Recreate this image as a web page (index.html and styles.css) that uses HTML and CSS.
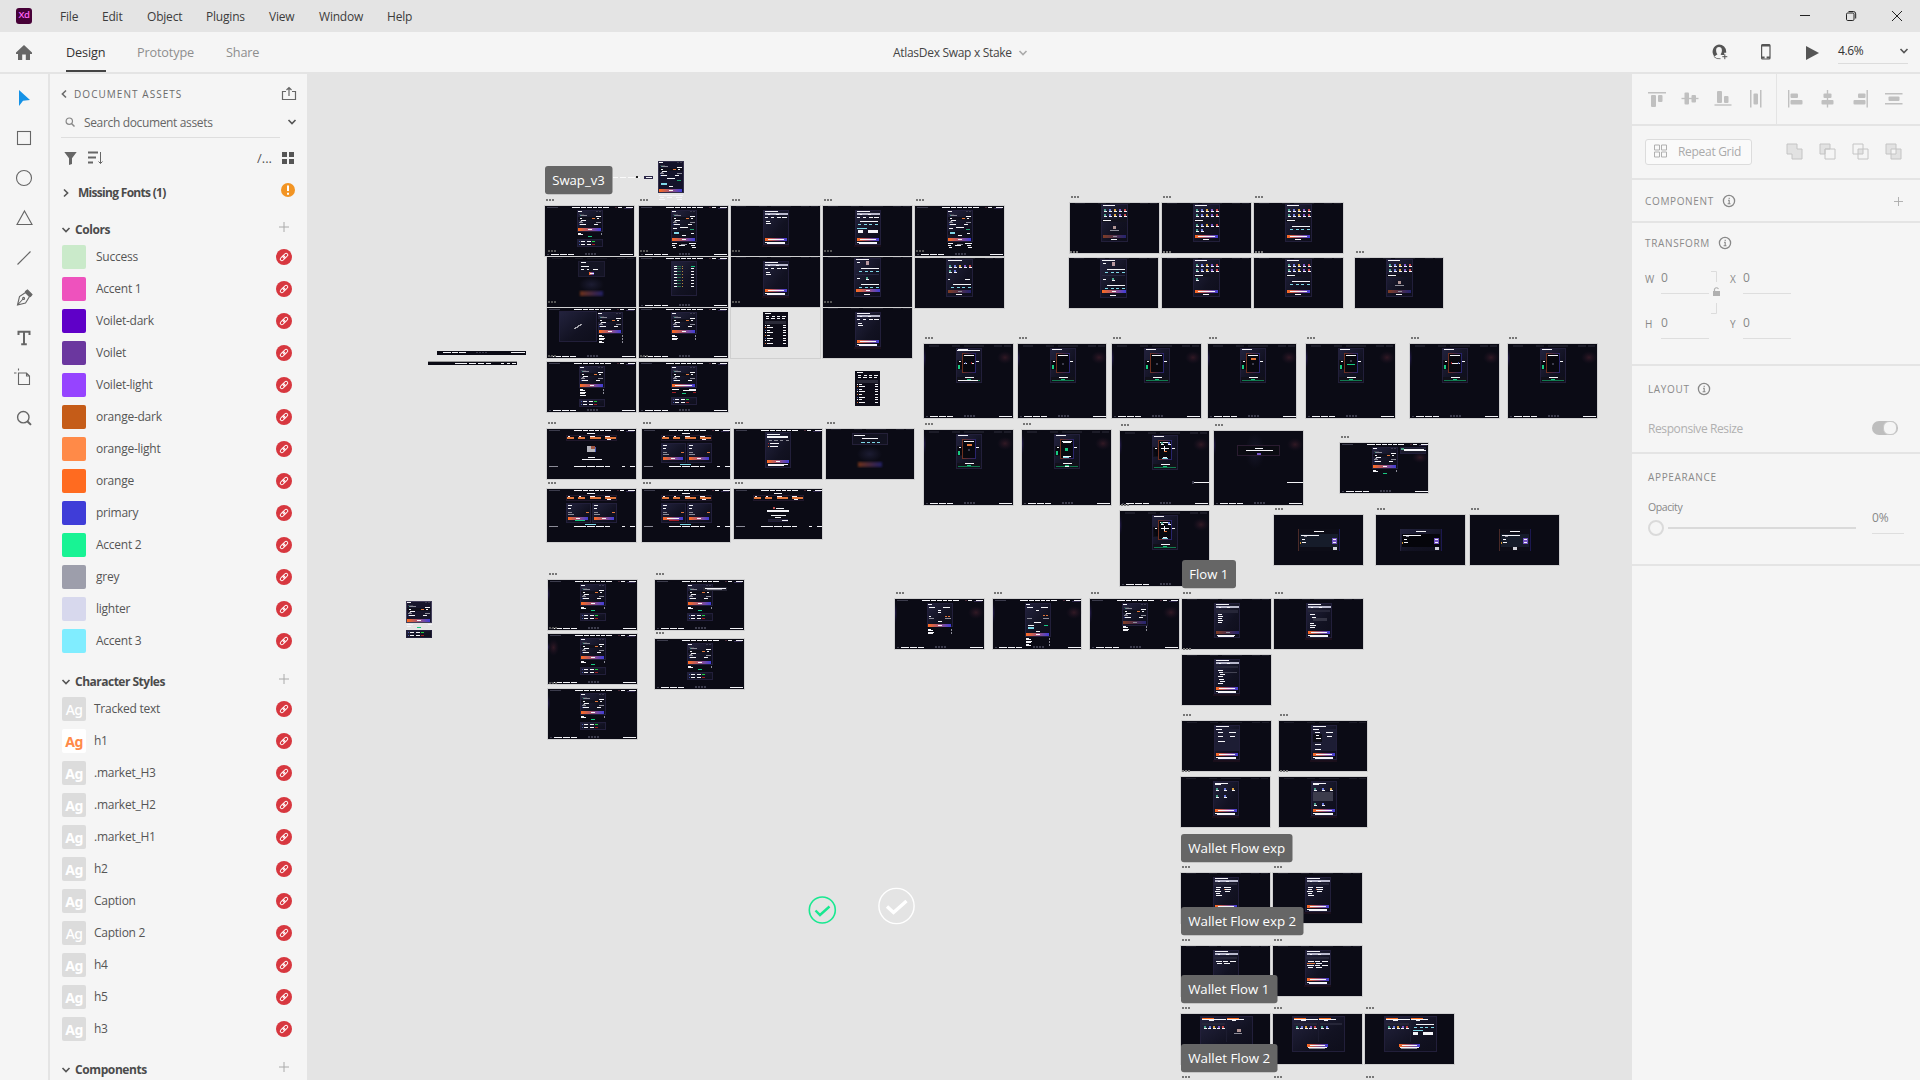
FILE: index.html
```html
<!DOCTYPE html>
<html lang="en">
<head>
<meta charset="utf-8">
<title>AtlasDex Swap x Stake</title>
<link rel="stylesheet" href="styles.css">
</head>
<body>
<svg class="defs" width="0" height="0">
  <symbol id="chev" viewBox="0 0 10 10"><path d="M1.5 3 5 6.6 8.5 3" fill="none" stroke="currentColor" stroke-width="1.6"/></symbol>
  <symbol id="plus" viewBox="0 0 10 10"><path d="M5 0v10M0 5h10" fill="none" stroke="currentColor" stroke-width="1"/></symbol>
  <symbol id="info" viewBox="0 0 14 14"><circle cx="7" cy="7" r="5.6" fill="none" stroke="currentColor" stroke-width="1.3"/><path d="M6 6.200h1.200v3.400M5.600 9.800h2.900M7.200 3.700v1.200" fill="none" stroke="currentColor" stroke-width="1.100"/></symbol>
  <symbol id="link" viewBox="0 0 16 16"><circle cx="8" cy="8" r="8" fill="#d7373f"/><g fill="none" stroke="#fff" stroke-width="1" transform="rotate(-45 8 8)"><rect x="3.4" y="6.4" width="5.4" height="3.2" rx="1.6"/><rect x="7.2" y="6.4" width="5.4" height="3.2" rx="1.6"/></g></symbol>
</svg>
<header class="titlebar">
  <div class="logo">Xd</div>
  <nav class="menu"><span class="m1">File</span><span class="m2">Edit</span><span class="m3">Object</span><span class="m4">Plugins</span><span class="m5">View</span><span class="m6">Window</span><span class="m7">Help</span></nav>
  <div class="winbtns">
    <svg width="12" height="12" viewBox="0 0 12 12"><path d="M1 5.5h10" stroke="#222" fill="none"/></svg>
    <svg width="12" height="12" viewBox="0 0 12 12"><g fill="none" stroke="#222"><rect x="1.5" y="3" width="7.5" height="7.5" rx="1.2"/><path d="M3.5 1.5h4.8a2.4 2.4 0 0 1 2.4 2.4v4.6"/></g></svg>
    <svg width="12" height="12" viewBox="0 0 12 12"><path d="m1 1 10 10M11 1 1 11" stroke="#222" fill="none"/></svg>
  </div>
</header>
<div class="modebar">
  <svg class="home" width="18" height="16" viewBox="0 0 18 16"><path d="M9 0 17 7.6V9h-2v6h-4.200V9.500H7.200V15H3V9H1V7.600z" fill="#666"/></svg>
  <nav class="modes"><span class="active">Design</span><span class="proto">Prototype</span><span class="share">Share</span></nav>
  <div class="doc"><span>AtlasDex Swap x Stake</span><svg width="10" height="10"><use href="#chev"/></svg></div>
  <div class="actions">
    <svg class="user" width="18" height="17" viewBox="0 0 18 17"><path d="M8 .5a7.200 7.200 0 0 1 7.200 7.200v1h-2V11h-2.700l-1-.8c1-1 1.400-2.500 1.400-4C10.900 3.800 9.700 3 8 3S5.100 3.800 5.100 6.200c0 1.500.4 3 1.400 4L3.400 12.400A7.200 7.200 0 0 1 8 .5z" fill="#555"/><path d="M2.800 12.500A7.200 7.200 0 0 0 9.500 14.700" fill="none" stroke="#777"/><path d="M13.800 10.200v5M11.300 12.700h5" stroke="#555" fill="none"/></svg>
    <svg class="phone" width="10" height="16" viewBox="0 0 10 16"><rect x=".6" y=".6" width="8.400" height="14.400" rx="1" fill="none" stroke="#555" stroke-width="1.200"/><path d="M.6 1.500h8.400M.6 13.500h3m2 0h3.400" stroke="#555" stroke-width="2"/></svg>
    <svg class="play" width="13" height="14" viewBox="0 0 13 14"><path d="M0 0v14l13-7z" fill="#555"/></svg>
    <div class="zoom"><span>4.6%</span><svg width="10" height="10"><use href="#chev"/></svg></div>
  </div>
</div>
<main class="work">
  <aside class="tools">
    <svg viewBox="0 0 20 20"><path d="M5 2v16l4-5.300 7-.7z" fill="#1592e6"/></svg>
    <svg viewBox="0 0 20 20"><rect x="3.500" y="3.500" width="13" height="13"/></svg>
    <svg viewBox="0 0 20 20"><circle cx="10" cy="10" r="7.500"/></svg>
    <svg viewBox="0 0 20 20"><path d="M10.500 3 18 16.500H3z"/></svg>
    <svg viewBox="0 0 20 20"><path d="M3.500 16.500 16.500 3.500"/></svg>
    <svg viewBox="0 0 20 20"><path d="M3.500 17 5.500 8.500l6-4 4 4-4 6.500zM3.500 17l5.500-6"/><circle cx="9.600" cy="10.400" r="1"/><path d="m11.500 3.500 2-1.500 4.500 4.500-1.500 2z" fill="#666"/></svg>
    <svg viewBox="0 0 20 20"><path d="M4.500 7V3.700h11V7M10 3.700v13M7.200 16.300h5.600" stroke-width="2"/></svg>
    <svg class="ab" viewBox="0 0 20 20"><path d="M4.500 6v11.500h11V9L12.500 6zM2.500 6h-2.500M4.500 3.500V1.500M12.500 6v3h3"/></svg>
    <svg viewBox="0 0 20 20"><circle cx="9.300" cy="9.200" r="5.700" stroke-width="1.400"/><path d="m13.300 13.200 3.700 3.700" stroke-width="2"/></svg>
  </aside>
  <aside class="assets">
    <div class="crumb"><svg class="left" width="10" height="10"><use href="#chev"/></svg><span>DOCUMENT ASSETS</span><svg class="export" width="16" height="15" viewBox="0 0 16 15"><path d="M5 5.500H1.500v8h13v-8H11M8 10V1.500M5.500 4 8 1.500 10.500 4" fill="none" stroke="#666" stroke-width="1.200"/></svg></div>
    <div class="search"><svg class="mag" width="10" height="10" viewBox="0 0 10 10"><circle cx="4.300" cy="4.200" r="3.200" fill="none" stroke="#888" stroke-width="1.200"/><path d="m6.500 6.500 3 3" stroke="#888" stroke-width="1.500"/></svg><span>Search document assets</span><svg class="drop" width="10" height="10"><use href="#chev"/></svg></div>
    <div class="filters">
      <svg width="13" height="13" viewBox="0 0 13 13"><path d="M.3 0h12.400L8 6.200V12l-3 .9V6.200z" fill="#666"/></svg>
      <svg width="16" height="14" viewBox="0 0 16 14"><path d="M1 1.500h10M1 6.500h8M1 11.500h5" stroke="#666" stroke-width="2"/><path d="M13.500 1v11.500M11.500 10.500l2 2 2-2" stroke="#666" fill="none"/></svg>
      <span class="path">/...</span>
      <svg class="gridi" width="12" height="12" viewBox="0 0 12 12"><path d="M0 0h5v5H0zM7 0h5v5H7zM0 7h5v5H0zM7 7h5v5H7z" fill="#555"/></svg>
    </div>
    <div class="missing"><svg class="right" width="10" height="10"><use href="#chev"/></svg><b>Missing Fonts (1)</b><svg class="warn" width="14" height="14" viewBox="0 0 14 14"><circle cx="7" cy="7" r="7" fill="#f29423"/><path d="M7 2.500v5.500M7 9.800v2" stroke="#fff" stroke-width="2"/></svg></div>
    <div class="head h-colors"><svg width="10" height="10"><use href="#chev"/></svg><b>Colors</b><svg class="add" width="10" height="10"><use href="#plus"/></svg></div>
    <div class="list" id="colors"></div>
    <div class="head h-chars"><svg width="10" height="10"><use href="#chev"/></svg><b>Character Styles</b><svg class="add" width="10" height="10"><use href="#plus"/></svg></div>
    <div class="list" id="chars"></div>
    <div class="head h-comps"><svg width="10" height="10"><use href="#chev"/></svg><b>Components</b><svg class="add" width="10" height="10"><use href="#plus"/></svg></div>
  </aside>
  <section class="canvas"><svg id="board" width="1325" height="1008" viewBox="307 72 1325 1008"></svg></section>
  <aside class="props">
    <section class="align">
      <svg width="144" height="50" viewBox="1632 74 144 50"><g fill="#c0c0c0"><rect x="1648" y="92" width="18" height="1.500"/><rect x="1651" y="95" width="5" height="12" rx="1"/><rect x="1658" y="95" width="4.500" height="7" rx="1"/><rect x="1681.500" y="97.800" width="17" height="1.400"/><rect x="1684.500" y="92.500" width="4.500" height="12" rx="1"/><rect x="1691.500" y="95" width="4.500" height="7.500" rx="1"/><rect x="1714.500" y="104.300" width="17" height="1.400"/><rect x="1717" y="91" width="5" height="12" rx="1"/><rect x="1724" y="96" width="4.500" height="7" rx="1"/><rect x="1750" y="90" width="1.500" height="17.500"/><rect x="1760" y="90" width="1.500" height="17.500"/><rect x="1753.500" y="93.500" width="4.500" height="11" rx="1"/></g></svg>
      <svg class="second" width="144" height="50" viewBox="1777 74 143 50"><g fill="#c0c0c0"><rect x="1788" y="90" width="1.400" height="17.500"/><rect x="1790.500" y="93.500" width="7.500" height="4.500" rx="1"/><rect x="1790.500" y="100" width="12" height="4.500" rx="1"/><rect x="1826.800" y="90" width="1.400" height="17.500"/><rect x="1823.500" y="93.500" width="8" height="4.500" rx="1"/><rect x="1821.500" y="100" width="12" height="4.500" rx="1"/><rect x="1866.500" y="90" width="1.400" height="17.500"/><rect x="1858" y="93.500" width="7.500" height="4.500" rx="1"/><rect x="1853.500" y="100" width="12" height="4.500" rx="1"/><rect x="1885" y="93" width="17.500" height="1.500"/><rect x="1885" y="103" width="17.500" height="1.500"/><rect x="1888.500" y="96.500" width="11" height="4.500" rx="1"/></g></svg>
    </section>
    <section class="repeat">
      <div class="rg"><svg width="14" height="14" viewBox="0 0 14 14"><path d="M.5 1h5v5h-5zM7.500 1h5v5h-5zM.5 8h5v5h-5zM7.500 8h5v5h-5z" fill="none" stroke="#b0b0b0"/></svg><span>Repeat Grid</span></div>
      <div class="bools">
        <svg viewBox="0 0 17 17"><path d="M1 1h10v5h5v10H6v-5H1z" fill="#e2e2e2" stroke="#c4c4c4"/></svg>
        <svg viewBox="0 0 17 17"><path d="M1 1h10v5H6v5H1z" fill="#e2e2e2" stroke="#c4c4c4"/><path d="M6 6h10v10H6z" fill="none" stroke="#c4c4c4"/></svg>
        <svg viewBox="0 0 17 17"><path d="M6 6h5v5H6z" fill="#e2e2e2"/><path d="M1 1h10v10H1zM6 6h10v10H6z" fill="none" stroke="#c4c4c4"/></svg>
        <svg viewBox="0 0 17 17"><path d="M1 1h10v5h5v10H6v-5H1zM6 6v5h5V6z" fill="#e2e2e2" fill-rule="evenodd" stroke="#c4c4c4"/></svg>
      </div>
    </section>
    <section class="component"><span class="cap">COMPONENT</span><svg class="i" width="14" height="14"><use href="#info"/></svg><svg class="add2" width="9" height="9"><use href="#plus"/></svg></section>
    <section class="transform">
      <div class="row"><span class="cap">TRANSFORM</span><svg class="i" width="14" height="14"><use href="#info"/></svg></div>
      <div class="fields">
        <div class="col"><div class="f"><span class="k">W</span><span class="v">0</span></div><div class="f"><span class="k">H</span><span class="v">0</span></div></div>
        <svg class="lock" width="12" height="44" viewBox="0 0 12 44"><path d="M2 .5h5.500V11M2 42.500h5.500V32" fill="none" stroke="#dcdcdc"/><rect x="4" y="20" width="7" height="5" fill="#b0b0b0"/><path d="M5.500 20v-2q2-2.500 4 0" fill="none" stroke="#b0b0b0" stroke-width="1.200"/></svg>
        <div class="col"><div class="f"><span class="k k2">X</span><span class="v">0</span></div><div class="f"><span class="k k2">Y</span><span class="v">0</span></div></div>
      </div>
    </section>
    <section class="layout">
      <div class="row"><span class="cap">LAYOUT</span><svg class="i" width="14" height="14"><use href="#info"/></svg></div>
      <div class="resp"><span>Responsive Resize</span><i class="toggle"></i></div>
    </section>
    <section class="appearance">
      <span class="cap">APPEARANCE</span>
      <div class="op"><div class="opl"><span class="olab">Opacity</span><div class="slider"><i class="knob"></i><i class="track"></i></div></div><div class="oval">0%</div></div>
    </section>
    <section class="rest"></section>
  </aside>
</main>
<script src="board.js"></script>
</body>
</html>
```
FILE: styles.css
```css
*{box-sizing:border-box}
body{margin:0;width:1920px;height:1080px;overflow:hidden;background:#e4e4e4;font-family:"Open Sans","Noto Sans",sans-serif;font-size:12px;letter-spacing:-.2px;color:#4b4b4b;display:flex;flex-direction:column}
svg{display:block;flex:none}
.defs{position:absolute}
.titlebar{height:32px;flex:none;display:flex;align-items:center;padding-left:16px;color:#3c3c3c}
.logo{width:16px;height:16px;border-radius:3px;background:#470137;color:#ff61f6;font-size:9.500px;font-weight:600;line-height:14px;text-align:center;letter-spacing:-.3px}
.menu{display:flex;margin-left:28px}
.m1{width:42px}.m2{width:45px}.m3{width:59px}.m4{width:63px}.m5{width:50px}.m6{width:68px}
.winbtns{display:flex;gap:34px;margin-left:auto;padding-right:17px}
.modebar{height:40px;flex:none;background:#f5f5f5;display:flex;align-items:stretch;padding-left:15px}
.home{margin-top:13px}
.modes{display:flex;font-size:12.700px;color:#8e8e8e;line-height:41px;margin-left:33px;letter-spacing:-.15px}
.modes .active{color:#333;border-bottom:2px solid #444;width:40px;height:40px}
.proto{margin-left:31px;width:57px}.share{margin-left:32px}
.doc{display:flex;align-items:center;gap:6px;margin-left:auto;margin-right:0;color:#444;padding-top:1px;width:136px;white-space:nowrap;letter-spacing:-.3px}
.doc svg{color:#aaa}
.actions{display:flex;width:209px;margin-left:682px}
.user{margin-top:12px}.phone{margin:12px 0 0 32px}.play{margin:14px 0 0 35px}
.zoom{display:flex;margin-left:19px;width:70px;height:32px;border-bottom:1px solid #dcdcdc;justify-content:space-between;line-height:38px;color:#333;letter-spacing:-.4px}
.zoom svg{margin-top:14px;color:#555;margin-right:-1px}
.work{display:flex;margin-top:2px;height:1006px}
.tools{width:48px;background:#f5f5f5;padding:14px 0 0 14px;display:flex;flex-direction:column;gap:20px;flex:none}
.tools svg{width:20px;height:20px;fill:none;stroke:#666;stroke-width:1.100}
.tools svg:first-child{stroke:none}
.tools .ab{margin:-1px 0 1px}
.assets{width:257px;margin-left:2px;background:#f5f5f5;flex:none;display:flex;flex-direction:column;padding-left:11px;overflow:hidden;color:#555}
.crumb{display:flex;align-items:center;height:30px;margin-top:5px;font-size:10px;letter-spacing:1.050px;color:#6b6b6b;flex:none}
.crumb span{margin-left:3px;flex:1}
.left{transform:rotate(90deg) translateY(2px)}.right{transform:rotate(-90deg)}
.export{margin:-2px 10px 0 0}
.search{display:flex;align-items:center;height:29px;width:219px;border-bottom:1px solid #dedede;color:#666;flex:none;padding-bottom:2px}
.search span{margin-left:9px;white-space:nowrap;letter-spacing:-.35px}.mag{margin-left:4px}
.drop{margin-left:auto;margin-right:-17px;color:#555}
.filters{display:flex;align-items:center;height:41px;padding:0 0 1px 3px;gap:10px;flex:none}
.path{margin-left:auto;font-size:13px;letter-spacing:0}.gridi{margin:0 13px 0 0}
.missing{display:flex;align-items:center;height:29px;flex:none;padding-bottom:2px}
.missing b{margin-left:7px;flex:1;letter-spacing:-.7px}.warn{margin:-6px 12px 0 0}
b{font-weight:700;color:#4b4b4b;letter-spacing:-.4px;font-size:12px}
.head{display:flex;align-items:center;height:30px;flex:none;padding-bottom:1px}
.head b{margin-left:4px;flex:1}.add{margin:-5px 18px 0 0;color:#aaa}
.h-colors{margin-top:7px}.h-chars{margin-top:14px}.h-comps{margin-top:14px}
.h-chars b{letter-spacing:-.5px}
.list{display:flex;flex-direction:column;gap:8px;flex:none}
.item{display:flex;align-items:center;height:24px;padding-left:1px}
.sw{width:24px;height:24px;border-radius:2px}
.item span{flex:1;margin-left:10px;padding-bottom:1px;letter-spacing:-.25px}
.item .link{margin-right:15px}
.ag{width:24px;height:24px;border-radius:2px;background:#dcdcdc;color:#fff;font:700 14px/25px "Noto Sans","Open Sans",sans-serif;text-align:center;letter-spacing:-.6px}
.item .ag + span{margin-left:8px}
.ag.thin{font-weight:500}.ag.orange{background:#fff;color:#ff8a48}
.canvas{width:1325px;height:1008px;margin-top:-2px;flex:none}
.props{width:288px;flex:none;display:flex;flex-direction:column;gap:2px;color:#888}
.props section{background:#f5f5f5;flex:none}
.align{height:50px;display:flex}.second{border-left:1px solid #e4e4e4}
.repeat{height:52px;display:flex;align-items:center;padding:0 0 1px 13px}
.rg{width:107px;height:26px;border:1px solid #dcdcdc;border-radius:3px;background:#fafafa;display:flex;align-items:center;gap:10px;padding:0 0 1px 8px;color:#aaa;white-space:nowrap;letter-spacing:-.3px}
.bools{display:flex;gap:16px;margin:-1px 0 0 34px}.bools svg{width:17px;height:17px}
.cap{font-size:10px;letter-spacing:.65px;color:#8a8a8a}
.i{color:#888;margin-left:8px}
.component{height:41px;display:flex;align-items:center;padding:1px 17px 0 13px}.add2{margin-left:auto;color:#aaa}
.transform{height:141px;padding:14px 13px}
.row{display:flex;align-items:center;height:14px}
.transform .row{margin-top:-2px;height:16px}
.fields{display:flex;margin-top:13px}
.col{display:flex;flex-direction:column;gap:15px}
.f{display:flex;height:30px;line-height:28px}
.k{width:16px;font-size:10px;padding-top:1px}.k2{width:13px}
.v{width:48px;border-bottom:1px solid #dedede}
.lock{margin:7px 9px 0 0}
.layout{height:86px;padding:16px}
.layout .i{margin-left:7px}
.resp{display:flex;justify-content:space-between;align-items:center;margin-top:22px;padding-right:6px;color:#b0b0b0;height:20px;letter-spacing:-.4px}
.toggle{width:26px;height:14px;border-radius:7px;background:#bebebe;display:flex;justify-content:flex-end;align-items:center;padding-right:1px;margin-top:-1px}
.toggle::after{content:"";width:12px;height:12px;border-radius:6px;background:#f5f5f5;border:1px solid #c8c8c8}
.appearance{height:110px;padding:16px;display:flex;flex-direction:column}
.op{display:flex;margin-top:15px}
.opl{width:224px;margin-right:0}
.olab{font-size:10.500px;letter-spacing:-.4px;display:block;height:17px;line-height:16px}
.slider{display:flex;align-items:center;gap:4px;margin-top:4px}
.knob{width:16px;height:16px;border:2px solid #dadada;border-radius:50%}
.track{width:188px;height:2px;background:#dadada}
.oval{width:32px;height:30px;border-bottom:1px solid #dedede;line-height:28px;margin-top:5px}
.props .rest{flex:1}
#board text{fill:#fff;font-size:13.500px;letter-spacing:0}
```
FILE: board.js
```js
// Asset lists
const link = '<svg class="link" width="16" height="16"><use href="#link"/></svg>';
const colors = [['Success','#caeaca'],['Accent 1','#ee52bd'],['Voilet-dark','#5f00c8'],['Voilet','#6b379f'],['Voilet-light','#9644ff'],['orange-dark','#c55c18'],['orange-light','#ff8a48'],['orange','#ff6b20'],['primary','#3f3dd8'],['Accent 2','#18f394'],['grey','#9d9eab'],['lighter','#d7d8ed'],['Accent 3','#80edff']];
document.getElementById('colors').innerHTML = colors.map(([n, c]) => `<div class="item"><i class="sw" style="background:${c}"></i><span>${n}</span>${link}</div>`).join('');
const chars = [['Tracked text','thin'],['h1','orange'],['.market_H3',''],['.market_H2',''],['.market_H1',''],['h2',''],['Caption',''],['Caption 2','thin'],['h4',''],['h5',''],['h3','']];
document.getElementById('chars').innerHTML = chars.map(([n, c]) => `<div class="item"><i class="ag ${c}">Ag</i><span>${n}</span>${link}</div>`).join('');

// Artboards
let out = '', ox = 0, oy = 0;
const W = '#f4f4f8', G = '#8c8c98', D = '#3c3c4c', O = '#e0763c', C = '#7fd8e8', N = '#18c880', B = '#4a5ab0', RD = '#a01c24';
const R = (x, y, w, h, f, extra = '') => { out += `<rect x="${ox + x}" y="${oy + y}" width="${w}" height="${h}" fill="${f}" ${extra}/>`; };
const row = (y, f, ...xs) => { for (let i = 0; i < xs.length; i += 2) R(xs[i], y, xs[i + 1], 1, f); };
const box = (x, y, w, h, f = 'url(#card)', s = '#221f3a') => R(x + .5, y + .5, w - 1, h - 1, f, `stroke="${s}"`);
const btn = (x, y, w, dim) => { R(x, y, w, 3, 'url(#btn)', dim ? 'opacity=".45"' : ''); R(x + w / 2 - 2, y + 1, 4, 1, dim ? G : W); };
const wide = (x, y, w) => { btn(x, y, w); R(x + 3, y + 1, w - 6, 1, W); };
const nav = () => { row(1, D, 2, 11); row(1, W, 27, 8, 36, 5, 42, 5, 48, 4, 53, 4, 58, 6, 73, 4, 81, 7); R(70, 1, 2, 1, '#4a2a38'); R(79, 2, 8, 1, '#2c2448'); };
const foot = y => { row(y, W, 6, 8, 15, 7, 23, 6, 75, 13); R(2, y, 2, 1, D); row(y - 1, D, 40, 2, 43, 2, 46, 2, 49, 2); row(y, D, 40, 2, 43, 2, 46, 2, 49, 2); };
const haze = y => { row(y, '#1c1c28', 5, 10, 28, 8, 40, 20, 70, 8, 80, 7); };
const form = x => {
  row(5, W, x + 1, 4); row(5, D, x + 19, 2, x + 22, 2); row(8, D, x + 2, 5); row(9, G, x + 4, 6); R(x + 3, 9, 1, 1, '#3e9a8a');
  row(10, W, x + 19, 5); R(x + 1, 11, 24, 3, '#10101c'); row(12, W, x + 3, 2); row(12, O, x + 15, 3); row(12, W, x + 20, 2);
  row(14, W, x + 4, 5); row(15, G, x + 3, 2); row(16, G, x + 2, 4, x + 19, 5); row(18, W, x + 3, 6, x + 17, 4); R(x + 2, 18, 1, 1, B);
};
const ticks = y => { box(32, y, 26, 8); row(y + 2, W, 36, 4, 42, 4); row(y + 5, W, 36, 4, 42, 4); R(34, y + 2, 1, 1, B); R(34, y + 5, 1, 1, B); R(47, y + 2, 3, 1, '#20d040'); R(47, y + 5, 3, 1, RD); };
const under = (y, n) => { for (let i = 0; i < n; i++) { const t = y + i * 3; row(t, W, 33, 3 + i % 2 * 3); row(t + 1, W, 33, 5); R(56, t, 1, 2, G); } };
const glow = () => { R(73, 7, 16, 13, 'url(#red)'); R(0, 3, 5, 22, 'url(#vio)'); };
const icons = (y, n, x = 34, s = 5) => { for (let i = 0; i < n; i++) { R(x + i * s, y, 2, 2, ['#4aa08a', '#6a78d8', '#d8a040', '#7a58c8', '#c84848'][i % 5]); R(x + i * s - .5, y + 2, 3, 1, W); } };
const cyan = (y, x = 34) => { R(x + 2, y, 18, 1, W); row(y + 3, C, x, 3, x + 6, 3, x + 11, 3, x + 17, 3); };
const modal = () => { haze(0); box(32, 4, 26, 35); row(5, W, 34, 13); R(34, 7, 23, 2, '#b8b8cc'); row(8, W, 37, 2, 45, 3); };
const mfoot = () => { wide(34, 32, 22); R(34, 36, 20, 1, W); R(36, 37, 18, 1, W); R(31, 39, 27, 2, '#24121f', 'opacity=".6"'); };

const K = {
  swap() { nav(); foot(48); box(32, 4, 26, 22); form(32); btn(33, 22, 23); under(27, 1); row(30, N, 43, 4); ticks(33); },
  swapB() { K.swap(); R(0, 5, 5, 18, 'url(#vio)'); },
  planet() { K.swap(); R(0, 5, 11, 17, 'url(#red)'); R(0, 8, 5, 10, 'url(#vio)'); },
  tip() { K.swap(); R(48, 7, 24, 4, '#252533'); row(8, W, 50, 21); row(9, G, 52, 15); },
  long() { nav(); foot(48); box(32, 4, 26, 32); form(32); row(21, W, 41, 8); row(22, W, 34, 4); row(23, '#22a070', 51, 4); R(33, 25, 23, 4, '#10101c'); R(35, 26, 5, 2, C); row(27, W, 52, 3); row(29, W, 43, 4); btn(33, 32, 23); row(37, W, 33, 5, 50, 7); row(38, G, 42, 6); row(39, W, 33, 3, 40, 6, 52, 4); row(41, W, 34, 3, 53, 4); },
  blur() { haze(1); box(31, 4, 27, 16, '#141424', '#1f1d33'); row(5, W, 34, 5); row(9, W, 34, 8); row(12, W, 34, 3, 40, 2, 46, 5); btn(42, 15, 5); R(32, 20, 25, 15, 'url(#fog)'); R(33, 34, 23, 5, 'url(#btn)', 'opacity=".4" filter="url(#b)"'); },
  rates() { nav(); foot(48); box(32, 4, 26, 35); for (let i = 0; i < 8; i++) { const y = 9 + i * 2.9 | 0; row(y, W, 35, 3, 52, 3); row(y, '#20684c', 38, 4); R(43, y, 1, 1, '#b88c3c'); } row(9, N, 52, 4); },
  pick() { modal(); row(11, W, 34, 3, 40, 3, 46, 4, 51, 5); row(15, W, 35, 4); row(17, W, 35, 5); mfoot(); },
  none() { modal(); row(11, W, 34, 3, 40, 3, 46, 4, 51, 5); cyan(15, 35); row(22, C, 34, 10); R(35, 24, 5, 3, W); R(45, 24, 10, 3, W); mfoot(); },
  dual() { haze(0); box(31, 1, 27, 39); row(2, W, 33, 13); row(5, W, 34, 3); R(43, 4, 3, 4, '#b898a0'); cyan(11, 36); R(33, 17, 23, 1, '#262640'); row(21, W, 34, 3); icons(20, 1, 43); cyan(27, 36); btn(33, 32, 24); row(37, W, 41, 6); },
  grid() { haze(0); box(31, 1, 27, 38); row(2, W, 33, 12); icons(6, 5); icons(11, 5); R(32, 16, 25, 3, '#12121e'); row(17, W, 33, 8); row(36, W, 41, 6); },
  gridA() { K.grid(); R(43, 23, 3, 3, '#b09494'); row(27, G, 40, 9); btn(33, 32, 23, 1); },
  gridB() { K.grid(); icons(21, 5); icons(26, 2); wide(33, 32, 23); },
  gridC() { K.grid(); cyan(23, 36); wide(33, 32, 23); },
  gridD() { K.grid(); icons(20, 1); wide(33, 32, 23); },
  gridE() { haze(0); box(31, 1, 27, 38); row(2, W, 33, 14); icons(7, 5); icons(12, 2); row(21, W, 33, 2, 50, 5); cyan(26, 36); btn(33, 32, 23, 1); row(36, W, 41, 6); },
  chart() { nav(); foot(48); box(12, 3, 38, 31); out += `<path d="M${ox + 27} ${oy + 21}l8-5" stroke="#a8a8b0" stroke-width="1.200"/>`; ox += 19; box(32, 4, 25, 22); form(31); btn(33, 22, 22); under(27, 3); ox -= 19; },
  plain() { nav(); foot(48); box(32, 4, 26, 22); form(32); btn(33, 22, 23); under(27, 2); },
  plainT() { K.plain(); row(33, W, 33, 6); ticks(37); },
  err() { nav(); foot(48); box(32, 4, 26, 22); form(32); wide(33, 22, 23); row(27, W, 33, 7, 50, 7); row(28, W, 44, 13); row(30, RD, 33, 4, 54, 3); row(31, N, 43, 4); ticks(35); },
  stats() { nav(); row(4, W, 40, 8); box(19, 6, 51, 6, 'none', '#20182c'); R(20, 8, 7, 2, O); R(31, 8, 7, 2, O); R(43, 8, 11, 2, O); R(58, 8, 11, 2, O); row(7, W, 21, 2, 32, 2, 43, 5, 58, 5); row(10, W, 60, 4); },
  sfoot() { row(37, G, 2, 9); row(37, W, 27, 12, 40, 8, 49, 8, 58, 5, 75, 3, 83, 5); },
  poolA() { K.stats(); K.sfoot(); R(40, 17, 8, 6, '#b4b4bc'); R(44, 17, 4, 3, '#a05844'); R(48, 18, 1, 5, B); row(28, W, 41, 7); row(30, W, 35, 20); },
  poolB() { K.stats(); K.sfoot(); [19, 45].forEach(x => { box(x, 14, 25, 20); row(16, W, x + 2, 4); row(19, W, x + 2, 3); row(23, G, x + 2, 4); row(25, G, x + 2, 6); R(x + 20, 23, 3, 1, O); btn(x + 2, 28, 20); }); row(35, C, 38, 11); },
  poolC() { K.poolB(); row(31, N, 28, 10); },
  poolD() { K.poolB(); row(31, RD, 27, 10); row(29, W, 25, 12); },
  poolE() { K.stats(); K.sfoot(); R(39, 18, 2, 2, '#c05050'); row(19, W, 42, 8); R(33, 21, 22, 2, W); row(26, W, 37, 15); row(28, W, 41, 6); box(34, 30, 20, 3, '#20202c'); R(48, 31, 6, 1, W); },
  poolF() { nav(); box(31, 3, 26, 36); row(5, W, 33, 13); R(33, 7, 21, 2, W); row(11, G, 35, 3, 40, 4, 46, 3, 52, 3); row(14, W, 36, 9); row(17, W, 36, 8); R(34, 14, 1, 1, RD); R(34, 17, 1, 1, O); btn(33, 31, 22); R(34, 35, 20, 1, W); row(36, W, 34, 16); },
  poolG() { haze(0); box(26, 4, 36, 12, '#121220', '#242038'); row(6, W, 28, 11); row(9, W, 36, 16); row(13, C, 35, 4, 41, 3, 46, 3, 51, 3); R(31, 17, 25, 16, 'url(#fog)'); R(32, 33, 24, 5, 'url(#btn)', 'opacity=".4" filter="url(#b)"'); },
  stake() { nav(); foot(48); glow(); box(32, 4, 26, 24); row(5, W, 33, 4); row(8, W, 34, 6, 48, 7); row(11, W, 43, 3); row(13, W, 43, 3); row(17, O, 50, 2, 53, 2); row(17, W, 34, 2); row(19, G, 34, 5, 50, 6); row(22, W, 43, 4); btn(33, 25, 23); under(30, 2); },
  stakeL() { nav(); foot(48); glow(); box(32, 4, 26, 34); row(5, W, 33, 4); row(8, W, 34, 6, 48, 7); row(11, W, 43, 3); row(16, O, 50, 2, 53, 2); row(19, G, 34, 5, 50, 6); row(23, W, 43, 4, 41, 7); row(26, W, 35, 6); row(26, N, 51, 4); R(35, 28, 6, 2, C); row(32, W, 43, 4); btn(33, 34, 23); under(39, 3); },
  stakeD() { nav(); foot(48); glow(); box(32, 4, 26, 23); form(32); btn(33, 22, 23, 1); under(27, 2); },
  list() { modal(); R(34, 11, 22, 3, '#262638'); for (let i = 0; i < 5; i++) row(15 + i * 2, W, 36, 4 + i % 2); btn(34, 32, 23, 1); R(35, 36, 18, 1, W); row(37, W, 36, 16); },
  listB() { modal(); R(34, 11, 22, 2, '#262638'); row(15, W, 36, 5); row(18, W, 38, 4); R(39, 19, 14, 3, '#343444'); row(24, W, 36, 4); row(26, W, 36, 6); row(28, W, 36, 5); mfoot(); },
  listC() { modal(); R(34, 11, 22, 2, '#262638'); for (let i = 0; i < 7; i++) row(15 + i * 2.3 | 0, W, 36 + i % 3, 5); R(41, 17, 14, 1, '#444454'); mfoot(); },
  listD() { haze(1); box(32, 4, 26, 35); row(5, W, 34, 13); R(33, 8, 24, 22, '#1d1d34'); row(8, W, 34, 6); row(11, W, 36, 5, 47, 7); row(15, W, 36, 5, 48, 5); row(20, W, 36, 7); mfoot(); },
  listE() { K.listD(); R(34, 13, 9, 8, '#0e0e18'); row(14, W, 37, 3); row(17, W, 37, 5); row(23, W, 36, 6); row(28, W, 36, 6); },
  coins() { haze(1); box(32, 4, 26, 35); row(6, W, 34, 13); row(7, W, 34, 6); icons(11, 3, 35, 8); icons(18, 2, 35, 8); mfoot(); },
  coinsB() { haze(1); box(32, 4, 26, 35); row(6, W, 34, 13); row(7, W, 34, 6); icons(11, 3, 35, 8); R(34, 15, 20, 9, '#3c3c4c'); icons(26, 2, 35, 8); mfoot(); },
  exp() { modal(); R(33, 10, 23, 2, '#262638'); row(14, W, 35, 5, 43, 7); row(16, W, 35, 4, 44, 6); row(18, W, 34, 6, 44, 5); row(20, W, 35, 4); row(22, W, 35, 6); R(43, 16, 1, 1, O); mfoot(); },
  expB() { modal(); R(33, 11, 23, 2, '#262638'); row(15, W, 35, 6, 42, 5, 49, 6); row(17, W, 36, 5, 43, 6); },
  expC() { K.expB(); row(19, W, 34, 7, 42, 5, 49, 6); row(17, O, 34, 8); row(21, W, 35, 5, 43, 6); mfoot(); },
  two() { box(19, 2, 53, 36); R(21, 4, 12, 1, '#ff7020'); R(46, 4, 12, 1, '#ff7020'); row(5, W, 21, 24, 46, 17); row(6, W, 28, 5, 51, 4); R(21, 9, 23, 2, '#262638'); R(45, 4, 1, 24, '#1c1c30'); icons(12, 5, 23, 4.5); wide(34, 30, 21); row(33, W, 35, 19); row(34, G, 36, 16); },
  twoA() { K.two(); R(56, 15, 4, 3, '#b09494'); row(19, G, 53, 8); },
  twoB() { K.two(); icons(12, 2, 48); R(47, 9, 22, 2, '#262638'); },
  twoC() { K.two(); cyan(10, 49); row(16, C, 48, 10); R(48, 18, 5, 3, W); R(58, 18, 10, 3, W); },
  bridge(h, v = 0) { haze(1); haze(2); glow(); foot(h - 2); box(32, 4, 26, 35); row(5, W, 34, 10); R(33, 33, 24, 5, '#11111a'); box(33, 16, 6, 10, '#07070e', '#11111a'); R(34, 21, 2, 4, N); row(17, W, 35, 2, 52, 3); box(38, 9, 14, 20, '#08080f', 'url(#edge)'); row(11, W, 40, 10); row(33, W, 41, 9); row(35, N, 43, 4); row(36, '#127a50', 34, 22);
    if (v == 0) { R(33, 6, 23, 1, W); row(19, W, 40, 3, 47, 3); R(41, 18, 1, 2, B); R(47, 18, 1, 2, RD); row(36, W, 34, 20); }
    if (v == 1) R(44, 19, 2, 2, D);
    if (v == 2) { R(43, 14, 5, 2, O); R(44, 19, 2, 2, D); }
    if (v == 3) { R(44, 16, 2, 2, D); R(41, 20, 8, 1, N); }
    if (v == 4) { row(19, W, 41, 9); R(41, 18, 1, 2, RD); R(48, 18, 1, 2, B); }
    if (v == 5) { row(12, W, 41, 8); R(43, 18, 3, 3, N); row(26, W, 41, 8); row(27, C, 41, 6); R(43, 36, 4, 1, W); }
    if (v == 6) { R(34, 21, 2, 4, '#0a0a12'); icons(11, 2, 41, 7); row(17, W, 41, 8); R(44, 15, 1, 6, W); row(20, O, 44, 3); row(26, W, 43, 4); row(27, C, 42, 6); } },
  b0() { K.bridge(74, 0); }, b1() { K.bridge(74, 1); }, b2() { K.bridge(74, 2); }, b3() { K.bridge(74, 3); }, b4() { K.bridge(74, 4); },
  b5() { K.bridge(75, 5); }, b6() { K.bridge(74, 6); row(51, W, 73, 16); R(72, 50, 2, 3, D); }, b7() { K.bridge(75, 2); }, b8() { K.bridge(75, 6); },
  alert() { glow(); foot(72); R(31, 2, 20, 36, 'url(#fog)', 'opacity=".7"'); box(23, 14, 43, 11, '#0b0b12', '#2a1c30'); row(17, W, 41, 8); row(19, W, 32, 27); R(43, 22, 4, 2, '#7a58c8'); row(51, W, 73, 16); },
  toast() { nav(); foot(48); box(32, 4, 26, 22); form(32); btn(33, 22, 23); under(27, 1); row(30, N, 43, 4); R(72, 9, 16, 11, 'url(#red)'); box(60, 4, 26, 7, '#1c1c2c'); row(6, W, 64, 20); row(7, W, 64, 22); R(61, 5, 3, 2, '#4aa080'); },
  dlg(v) { const x = v == 2 ? 29 : 24, w = v == 2 ? 32 : 42; R(x, 14, w, 22, v == 1 ? 'url(#card)' : '#0d0d17'); R(x, 14, 1, 22, v == 1 ? '#27243c' : '#4a2a28'); R(x + w - 1, 14, 1, 22, '#1c1850'); R(x + 2, 19, w - 4, 13, v == 1 ? '#05050b' : '#161c2a'); row(16, W, 40, 10); row(20, W, x + 3, 18); row(21, G, x + 6, 3); row(24, W, x + 4, 3); row(27, W, x + 4, 4); R(x + 2, 27, 1, 2, '#c89030'); [23, 26].forEach(y => { R(x + w - 8, y, 5, 3, '#7050c0'); R(x + w - 7, y + 1, 3, 1, W); }); R(v == 2 ? 43 : x + w - 7, 32, 4, 3, '#d0d0d8'); },
  d0() { K.dlg(0); }, d1() { K.dlg(1); }, d2() { K.dlg(2); }
};
const dots = (x, y, f = '#777') => { for (let i = 0; i < 3; i++) out += `<rect x="${x + 1 + i * 3}" y="${y}" width="2" height="2" fill="${f}"/>`; };
const boards = [
  [545,206,89,50,'swap'],[639,206,89,50,'long'],[731,206,89,50,'pick'],[823,206,89,50,'none'],[915,206,89,50,'long'],
  [547,257,89,50,'blur'],[639,257,89,50,'rates'],[731,257,89,50,'pick'],[823,257,89,50,'dual'],[915,258,89,50,'gridE'],
  [547,308,89,50,'chart'],[639,308,89,50,'plain'],[823,308,89,50,'pick'],[547,362,89,50,'plainT'],[639,362,89,50,'err'],
  [547,429,89,50,'poolA',1],[642,429,88,50,'poolB',1],[734,429,88,50,'poolF',1],[826,429,88,50,'poolG',1],
  [547,489,89,53,'poolC',1],[642,489,88,53,'poolD',1],[734,489,88,50,'poolE',1],
  [548,580,89,50,'swapB',1],[548,634,89,50,'planet'],[548,689,89,50,'swapB'],[655,580,89,50,'tip',1],[655,639,89,50,'swap',1],
  [895,599,89,50,'stake',1],[993,599,88,50,'stakeL',1],[1090,599,89,50,'stakeD',1],[1182,599,89,50,'list',1],[1274,599,89,50,'listB',1],
  [1182,655,89,50,'listC',1],[1182,721,89,50,'listD',1],[1279,721,88,50,'listE',1],[1181,777,89,50,'coins',1],[1279,777,88,50,'coinsB',1],
  [1181,873,89,50,'exp',1],[1273,873,89,50,'exp',1],[1181,946,89,50,'expB',1],[1273,946,89,50,'expC',1],
  [1181,1014,89,50,'twoA',1],[1273,1014,89,50,'twoB',1],[1365,1014,89,50,'twoC',1],
  [1070,203,89,50,'gridA',1],[1162,203,89,50,'gridB',1],[1254,203,89,50,'gridC',1],
  [1069,258,89,50,'dual',1],[1162,258,89,50,'gridD',1],[1254,258,89,50,'gridC',1],[1355,258,88,50,'gridA',1],
  [924,344,89,74,'b0',1],[1018,344,88,74,'b1',1],[1112,344,89,74,'b1',1],[1208,344,88,74,'b2',1],[1306,344,89,74,'b3',1],[1410,344,89,74,'b4',1],[1508,344,89,74,'b1',1],
  [924,430,89,75,'b7',1],[1022,430,89,75,'b5',1],[1120,431,89,74,'b6',1],[1214,431,89,74,'alert',1],[1340,443,88,50,'toast',1],
  [1120,511,89,75,'b8',1],[1274,515,89,50,'d0',1],[1376,515,89,50,'d1',1],[1470,515,89,50,'d2',1]
];
out += `<defs>
<linearGradient id="btn"><stop stop-color="#ff6b20"/><stop offset="1" stop-color="#3f3dd8"/></linearGradient>
<linearGradient id="edge"><stop stop-color="#6e3020"/><stop offset="1" stop-color="#28246c"/></linearGradient>
<linearGradient id="card" x2="1" y2="1"><stop stop-color="#23233e"/><stop offset=".6" stop-color="#121222"/><stop offset="1" stop-color="#0e0e1b"/></linearGradient>
<radialGradient id="red"><stop stop-color="#5a2834" stop-opacity=".5"/><stop offset="1" stop-color="#301830" stop-opacity="0"/></radialGradient>
<radialGradient id="vio" cx="0"><stop stop-color="#3c2c80" stop-opacity=".55"/><stop offset="1" stop-color="#201848" stop-opacity="0"/></radialGradient>
<radialGradient id="fog"><stop stop-color="#1c1c32"/><stop offset="1" stop-color="#0b0b15"/></radialGradient>
<filter id="b"><feGaussianBlur stdDeviation="1.200"/></filter></defs>`;
out += '<rect x="730.500" y="307.500" width="90" height="51" fill="none" stroke="#cfcfcf"/>';
out += '<g shape-rendering="crispEdges">';
for (const [x, y, w, h, k] of boards) {
  out += `<rect x="${x - 1}" y="${y - 1}" width="${w + 2}" height="${h + 2}" fill="#cfcfd0"/><rect x="${x}" y="${y}" width="${w}" height="${h}" fill="#0b0b15"/>`;
  ox = x; oy = y; K[k]();
}
for (const [x, y, , , , d] of boards) if (d) dots(x, y - 7);
[545, 639, 731, 823, 915].forEach(x => dots(x, 199));
[547, 639, 731, 823, 915].forEach(x => dots(x, 250, '#555'));
[547, 731, 823].forEach(x => dots(x, 301, '#555'));
[[547,355],[639,355],[548,627],[548,682]].forEach(p => dots(p[0], p[1], '#555'));

// Loose components on the pasteboard
const tokens = (x, y, h) => { ox = x; oy = y; R(0, 0, 25, h, '#0d0c18'); row(1, W, 2, 6); row(4, W, 3, 3, 9, 3, 14, 3, 19, 4); row(6, W, 3, 3, 8, 4, 14, 3, 19, 3); R(2, 9, 21, 3, '#2a2a38'); for (let i = 0; i < 8; i++) { row(13 + i * 2.6 | 0, W, 4, 3 + i * 3 % 6, 20, 3); R(2, 13 + i * 2.6 | 0, 1, 1, [W, O, B][i % 3]); } };
tokens(763, 312, 35); tokens(855, 371, 35);
ox = 626; oy = 157; box(32, 4, 26, 32, '#14132a', '#34304c'); form(32); row(21, W, 41, 8); row(23, '#22a070', 51, 4); R(35, 26, 6, 2, C); row(29, W, 43, 4); btn(33, 32, 23); row(38, W, 33, 24); row(40, W, 34, 4, 41, 5, 50, 6); row(42, W, 33, 6, 51, 5);
ox = 0; oy = 0; row(177, '#fafafa', 613, 5, 620, 6, 628, 7, 636, 4); R(636, 176, 2, 2, '#222'); R(644, 176, 9, 3, '#2c2848'); R(646, 177, 6, 1, W);
ox = 374; oy = 597; box(32, 4, 26, 22, '#17162c', '#44405c'); form(32); btn(33, 22, 23); row(27, W, 33, 6, 54, 4); row(29, W, 33, 4); row(30, N, 43, 4); ticks(33);
ox = 437; oy = 351; R(0, 0, 89, 4, '#0b0b15'); row(1, W, 6, 8, 15, 6, 22, 7, 74, 14); row(1, D, 39, 2, 42, 2, 45, 2, 48, 2);
ox = 428; oy = 361; R(0, 0, 89, 4, '#0b0b15'); R(0, 0, 89, 1, '#999'); row(2, W, 27, 12, 41, 7, 50, 6, 58, 5, 73, 3, 79, 3, 84, 4);
out += '</g>';
out += '<g fill="none" stroke="#18e890"><circle cx="822.300" cy="910" r="13" stroke-width="1.600"/><path d="m815.500 910.500 4.500 4.500 9.500-8.500" stroke-width="2.400"/></g>';
out += '<g fill="none" stroke="#fff"><circle cx="896.500" cy="906" r="17.600" stroke-width="1.400"/><path d="m887 906.500 6.500 6 13-11.500" stroke-width="3.400"/></g>';

// Flow name tags
[['Swap_v3',545,166,67.5,52.5],['Flow 1',1182,560,54,39],['Wallet Flow exp',1181,834,111.5,97],['Wallet Flow exp 2',1181,907,122.5,108],['Wallet Flow 1',1181,975,96.5,81],['Wallet Flow 2',1181,1044,96.5,82]].forEach(([t, x, y, w, l]) => {
  out += `<rect x="${x}" y="${y}" width="${w}" height="28.300" rx="3" fill="#666"/><text x="${x + 7.2}" y="${y + 19.3}" textLength="${l}" lengthAdjust="spacingAndGlyphs">${t}</text>`;
});
dots(1181, 1076); dots(1273, 1076); dots(1365, 1076);
document.getElementById('board').innerHTML = out;
```
